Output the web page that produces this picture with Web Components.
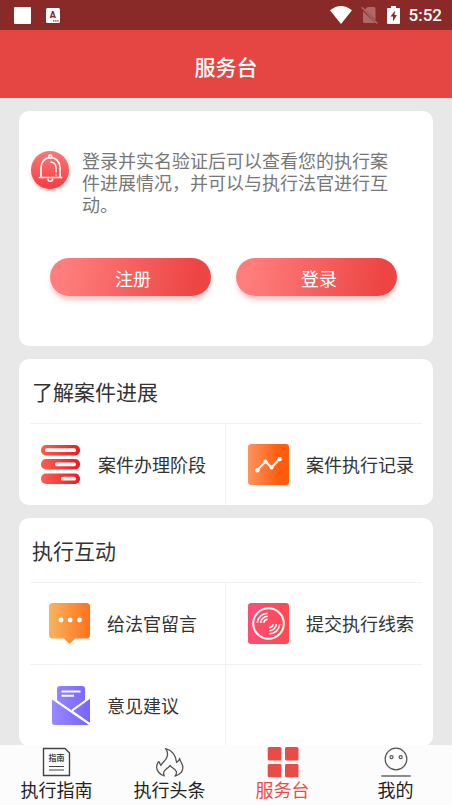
<!DOCTYPE html>
<html lang="zh-CN">
<head>
<meta charset="utf-8">
<meta name="viewport" content="width=device-width, initial-scale=1">
<title>服务台</title>
<style>
  html, body { margin: 0; height: 100%; }
  body { font-family: Roboto, "Noto Sans CJK SC", sans-serif; font-size: 18px; color: #333; background: #e8e8e8; }
</style>
</head>
<body>
<service-app></service-app>
<script>
const define = (name, html, setup) => {
  const template = document.createElement('template');
  template.innerHTML = html;
  customElements.define(name, class extends HTMLElement {
    constructor() {
      super();
      this.attachShadow({ mode: 'open' }).append(template.content.cloneNode(true));
    }
    connectedCallback() { if (setup) setup(this, this.shadowRoot); }
  });
};

const icons = {
  stages: `<svg viewBox="0 0 41 41"><defs><linearGradient id="g"><stop stop-color="#fd5e50"/><stop offset="1" stop-color="#ee1a22"/></linearGradient></defs>
    <g fill="url(#g)"><rect x="1" y="1" width="39" height="10.500" rx="5"/><rect x="1" y="15" width="39" height="10.500" rx="5"/><rect x="1" y="29.500" width="39" height="10.500" rx="5"/></g>
    <g fill="#fff"><rect x="5" y="4.300" width="31" height="3.800" rx="1.600"/><rect x="15" y="18.400" width="21" height="3.800" rx="1.600"/><rect x="21" y="32.800" width="15" height="3.800" rx="1.600"/></g></svg>`,
  chart: `<svg viewBox="0 0 41 41"><defs><linearGradient id="g"><stop stop-color="#ff925f"/><stop offset=".75" stop-color="#ff5d0d"/></linearGradient></defs>
    <rect width="41" height="41" rx="3" fill="url(#g)"/><path d="M9.500 26 17.500 17.500 23.500 23.500 31.500 15" fill="none" stroke="#fff" stroke-width="2.200" stroke-linejoin="round"/>
    <g fill="#fff"><circle cx="9.300" cy="26.200" r="2.200"/><circle cx="17.500" cy="17.500" r="2"/><circle cx="23.500" cy="23.500" r="2"/><circle cx="31.700" cy="15" r="2.200"/></g></svg>`,
  chat: `<svg viewBox="0 0 41 41"><defs><linearGradient id="g"><stop stop-color="#f8b45e"/><stop offset="1" stop-color="#ff711d"/></linearGradient></defs>
    <path d="M3.500 0h34a3.500 3.500 0 0 1 3.500 3.500v28.500a3.500 3.500 0 0 1-3.500 3.500H26l-4.500 4.700q-1 .8-2 0L15 35.500H3.500A3.500 3.500 0 0 1 0 32V3.500A3.500 3.500 0 0 1 3.500 0z" fill="url(#g)"/>
    <g fill="#fff"><circle cx="12" cy="17" r="2.400"/><circle cx="21.200" cy="17" r="2.400"/><circle cx="30.500" cy="17" r="2.400"/></g></svg>`,
  disc: `<svg viewBox="0 0 41 41"><defs><linearGradient id="g"><stop stop-color="#fc4d77"/><stop offset="1" stop-color="#ff4a50"/></linearGradient></defs>
    <rect width="41" height="41" rx="3" fill="url(#g)"/><g fill="none" stroke="#fff" stroke-width="1.600"><circle cx="20.500" cy="20.500" r="15.300" stroke-width="2"/>
    <path d="M9.300 19.800A10.400 10.400 0 0 1 19.700 10.200M12.600 19.800A7.200 7.200 0 0 1 19.700 13.300M15.800 19.800A4 4 0 0 1 19.700 16.400"/>
    <path d="M31.700 21.200A10.400 10.400 0 0 1 21.300 30.800M28.400 21.200A7.200 7.200 0 0 1 21.300 27.700M25.200 21.200A4 4 0 0 1 21.300 24.600"/></g></svg>`,
  mail: `<svg viewBox="0 0 41 41"><defs><linearGradient id="g" gradientUnits="userSpaceOnUse" x1="3" x2="41" y1="0" y2="0"><stop stop-color="#9789ff"/><stop offset="1" stop-color="#7564ff"/></linearGradient></defs>
    <path d="M8 17V4a3 3 0 0 1 3-3h22a3 3 0 0 1 3 3v13L23 26.500Z" fill="url(#g)"/>
    <path d="M3 14.500 40.500 40H6a3 3 0 0 1-3-3Z" fill="url(#g)"/><path d="M41 13.500V38L24 26Z" fill="url(#g)"/>
    <path d="M2.500 12.500 41 39.500M23 25.500 41 12.500" stroke="#fff" stroke-width="2"/><path d="M12.500 6.500h19M12.500 10.800h12.500" stroke="#fff" stroke-width="2"/></svg>`,
  guide: `<svg viewBox="0 0 30 30"><path d="M1.500 1.500h21.500l4.500 4.500v22.500h-26z" fill="none" stroke="#444" stroke-width="1.400"/><path d="M7 19.500h15M7 23h15" stroke="#444" stroke-width="1.200"/><text x="14.500" y="14" text-anchor="middle" font-size="8" font-weight="700" fill="#444">指南</text></svg>`,
  flame: `<svg viewBox="0 0 30 30"><path d="M9.300 29C4.300 27.500 1.600 23.500 1.600 20C1.600 17.500 2.600 15.800 4 14.600L5.800 18.500C7 15.800 10.500 13.800 11.800 10.500C13.100 7 12.700 4 10.500 1.600C16.500 3 20.500 7.500 21.600 15.400C23 14.800 24.200 13.300 24.700 11.500C24.600 14.500 28 16.500 27.900 20.300C27.800 24.300 24.700 27.800 20 29C22.600 26.200 21.500 23.300 18.700 21.600C17 20.500 15.600 19.500 15.300 18.300C14.300 20 11.500 21.500 9.600 23.700C8.300 25.400 8.400 27.300 9.300 29Z" fill="none" stroke="#555" stroke-width="1.300" stroke-linejoin="round"/></svg>`,
  grid: `<svg viewBox="0 0 30 30"><g fill="currentColor"><rect x="-.3" width="13.800" height="13.500" rx="1.500"/><rect x="17" width="13.500" height="13.500" rx="1.500"/><rect x="-.3" y="17" width="13.800" height="13.300" rx="1.500"/><rect x="17" y="17" width="13.500" height="13.300" rx="1.500"/></g></svg>`,
  person: `<svg viewBox="0 0 30 30"><g fill="none" stroke="#555"><circle cx="15" cy="12" r="10.800" stroke-width="1.300"/><circle cx="10.500" cy="10.200" r="1.500" stroke-width="1.200"/><circle cx="19.700" cy="10.200" r="1.500" stroke-width="1.200"/><path d="M.3 29h29.400" stroke="#777" stroke-width="1.700"/></g></svg>`
};

define('status-bar', `
  <style>
    :host { display: flex; align-items: center; flex: none; height: 30px; padding: 0 10px 0 14px; background: #8a2a28; color: #fff; font-size: 17px; font-weight: 500; }
    svg { display: block; overflow: visible; }
    .group { display: flex; align-items: center; gap: 15px; }
    .end { margin-left: auto; gap: 9px; }
  </style>
  <div class="group">
    <svg width="17" height="17"><rect width="17" height="17" rx="1" fill="#fff"/></svg>
    <svg width="14" height="16"><rect y="1" width="14" height="15" rx="1.500" fill="#fff"/><text x="6.700" y="11.300" text-anchor="middle" font-size="9" font-weight="900" fill="#8a2a28">A</text><path d="M7 13.800h6" stroke="#8a2a28" stroke-width="1.200" stroke-dasharray="1.400 .7"/></svg>
  </div>
  <div class="group end">
    <svg width="22" height="18"><path d="M0 4.300Q11-4.200 22 4.300L11 18Z" fill="#fff"/></svg>
    <svg width="17" height="18"><path d="M6.500 1H13a1.500 1.500 0 0 1 1.500 1.500v11.300L3.800 3.600ZM2 5.200 14.500 17H3.500A1.500 1.500 0 0 1 2 15.500Z" fill="#ad6a69"/><path d="M.7 1.300 16.300 17.500" stroke="#ad6a69" stroke-width="1.400"/></svg>
    <svg width="13" height="18"><path d="M1 2h3V0h5v2h3q1 0 1 1v14q0 1-1 1H1q-1 0-1-1V3q0-1 1-1Z" fill="#fff"/><path d="M8 4.500 3.500 10.500H6v4.800L10 9H7.500Z" fill="#8a2a28"/></svg>
    <span>5:52</span>
  </div>`);

define('page-header', `
  <style>
    :host { display: flex; align-items: center; justify-content: center; flex: none; height: 68px; padding-top: 8px; box-sizing: border-box; background: #e64643; color: #fff; }
    h1 { margin: 0; font-size: 21px; line-height: 30px; font-weight: 500; }
  </style>
  <h1><slot></slot></h1>`);

define('login-card', `
  <style>
    :host { display: block; padding: 40px 36px 50px 12px; border-radius: 10px; background: #fff; }
    .notice { display: flex; gap: 13px; color: #777; }
    svg { flex: none; overflow: visible; }
    p { margin: 0; line-height: 22px; }
    .actions { display: grid; grid-template-columns: 1fr 1fr; gap: 25px; margin-top: 41px; padding-left: 19px; }
    button { height: 38px; padding: 2px 0 0 5px; border: 0; border-radius: 19px; font: inherit; color: #fff; background: linear-gradient(100deg, #ff7d7d 10%, #ec4543 90%); box-shadow: 0 5px 6px -2px #f0444466; }
  </style>
  <div class="notice">
    <svg width="38" height="38" viewBox="0 0 38 38" aria-hidden="true">
      <defs><linearGradient id="g" x2="0" y2="1"><stop stop-color="#f97979"/><stop offset="1" stop-color="#f53b40"/></linearGradient>
      <filter id="s" x="-20%" y="-20%" width="140%" height="150%"><feDropShadow dx="0" dy="2" stdDeviation="1.500" flood-color="#f54a4a" flood-opacity=".35"/></filter></defs>
      <circle cx="19" cy="19" r="19" fill="url(#g)" filter="url(#s)"/>
      <g fill="none" stroke="#fff" stroke-width="1.700" stroke-linecap="round"><path d="M8.500 26.500h22M10 26V16.500a9.500 10 0 0 1 19 0V26"/><circle cx="19.300" cy="5.500" r="1.500"/><path d="M17 28a2.300 2.300 0 0 0 4.600 0M20 11q5 .5 5 6v4M25 24v.1" stroke-width="1.500"/></g>
    </svg>
    <p><slot></slot></p>
  </div>
  <div class="actions"><button type="button">注册</button><button type="button">登录</button></div>`);

define('menu-card', `
  <style>
    :host { display: block; padding: 0 11px; border-radius: 10px; background: #fff; }
    h2 { margin: 0; padding: 3px 2px 0; height: 64px; box-sizing: border-box; font-size: 21px; line-height: 62px; font-weight: 400; }
    .items { display: grid; grid-template-columns: 1fr 1fr; }
  </style>
  <h2></h2><div class="items"><slot></slot></div>`,
  (host, root) => { root.querySelector('h2').textContent = host.getAttribute('heading'); });

define('menu-item', `
  <style>
    :host { display: block; border-top: 1px solid #f0f0f0; }
    :host(:nth-child(odd)) { border-right: 1px solid #f0f0f0; }
    :host(:nth-child(even)) a { padding: 0 0 0 14px; }
    a { display: flex; align-items: center; justify-content: center; gap: 17px; height: 81px; padding-right: 9px; color: inherit; text-decoration: none; white-space: nowrap; }
    svg { display: block; width: 41px; height: 41px; }
    .label { min-width: 5em; padding-bottom: 2px; }
  </style>
  <a href="#"><span class="icon"></span><span class="label"><slot></slot></span></a>`,
  (host, root) => {
    if (host.hasAttribute('icon')) root.querySelector('.icon').innerHTML = icons[host.getAttribute('icon')];
    else root.querySelector('a').remove();
  });

define('tab-bar', `
  <style>
    :host { display: block; flex: none; background: #fcfcfc; color: #222; }
    nav { display: grid; grid-template-columns: repeat(4, 1fr); height: 60px; }
  </style>
  <nav><slot></slot></nav>`);

define('tab-item', `
  <style>
    :host { display: block; }
    :host([active]) { color: #e84c46; }
    a { display: flex; flex-direction: column; align-items: center; padding-top: 2px; color: inherit; text-decoration: none; }
    svg { display: block; width: 30px; height: 30px; overflow: visible; }
    .label { line-height: 28px; }
  </style>
  <a href="#"><span class="icon"></span><span class="label"><slot></slot></span></a>`,
  (host, root) => {
    root.querySelector('.icon').innerHTML = icons[host.getAttribute('icon')];
    if (host.hasAttribute('active')) root.querySelector('a').setAttribute('aria-current', 'page');
  });

define('service-app', `
  <style>
    :host { display: flex; flex-direction: column; height: 100vh; }
    main { flex: 1; min-height: 0; overflow-y: auto; scrollbar-width: none; display: flex; flex-direction: column; gap: 13px; padding: 13px 19px 0; }
    main > * { flex: none; }
  </style>
  <status-bar></status-bar>
  <page-header>服务台</page-header>
  <main>
    <login-card>登录并实名验证后可以查看您的执行案件进展情况，并可以与执行法官进行互动。</login-card>
    <menu-card heading="了解案件进展">
      <menu-item icon="stages">案件办理阶段</menu-item>
      <menu-item icon="chart">案件执行记录</menu-item>
    </menu-card>
    <menu-card heading="执行互动">
      <menu-item icon="chat">给法官留言</menu-item>
      <menu-item icon="disc">提交执行线索</menu-item>
      <menu-item icon="mail">意见建议</menu-item>
      <menu-item></menu-item>
    </menu-card>
  </main>
  <tab-bar>
    <tab-item icon="guide">执行指南</tab-item>
    <tab-item icon="flame">执行头条</tab-item>
    <tab-item icon="grid" active>服务台</tab-item>
    <tab-item icon="person">我的</tab-item>
  </tab-bar>`);
</script>
</body>
</html>
